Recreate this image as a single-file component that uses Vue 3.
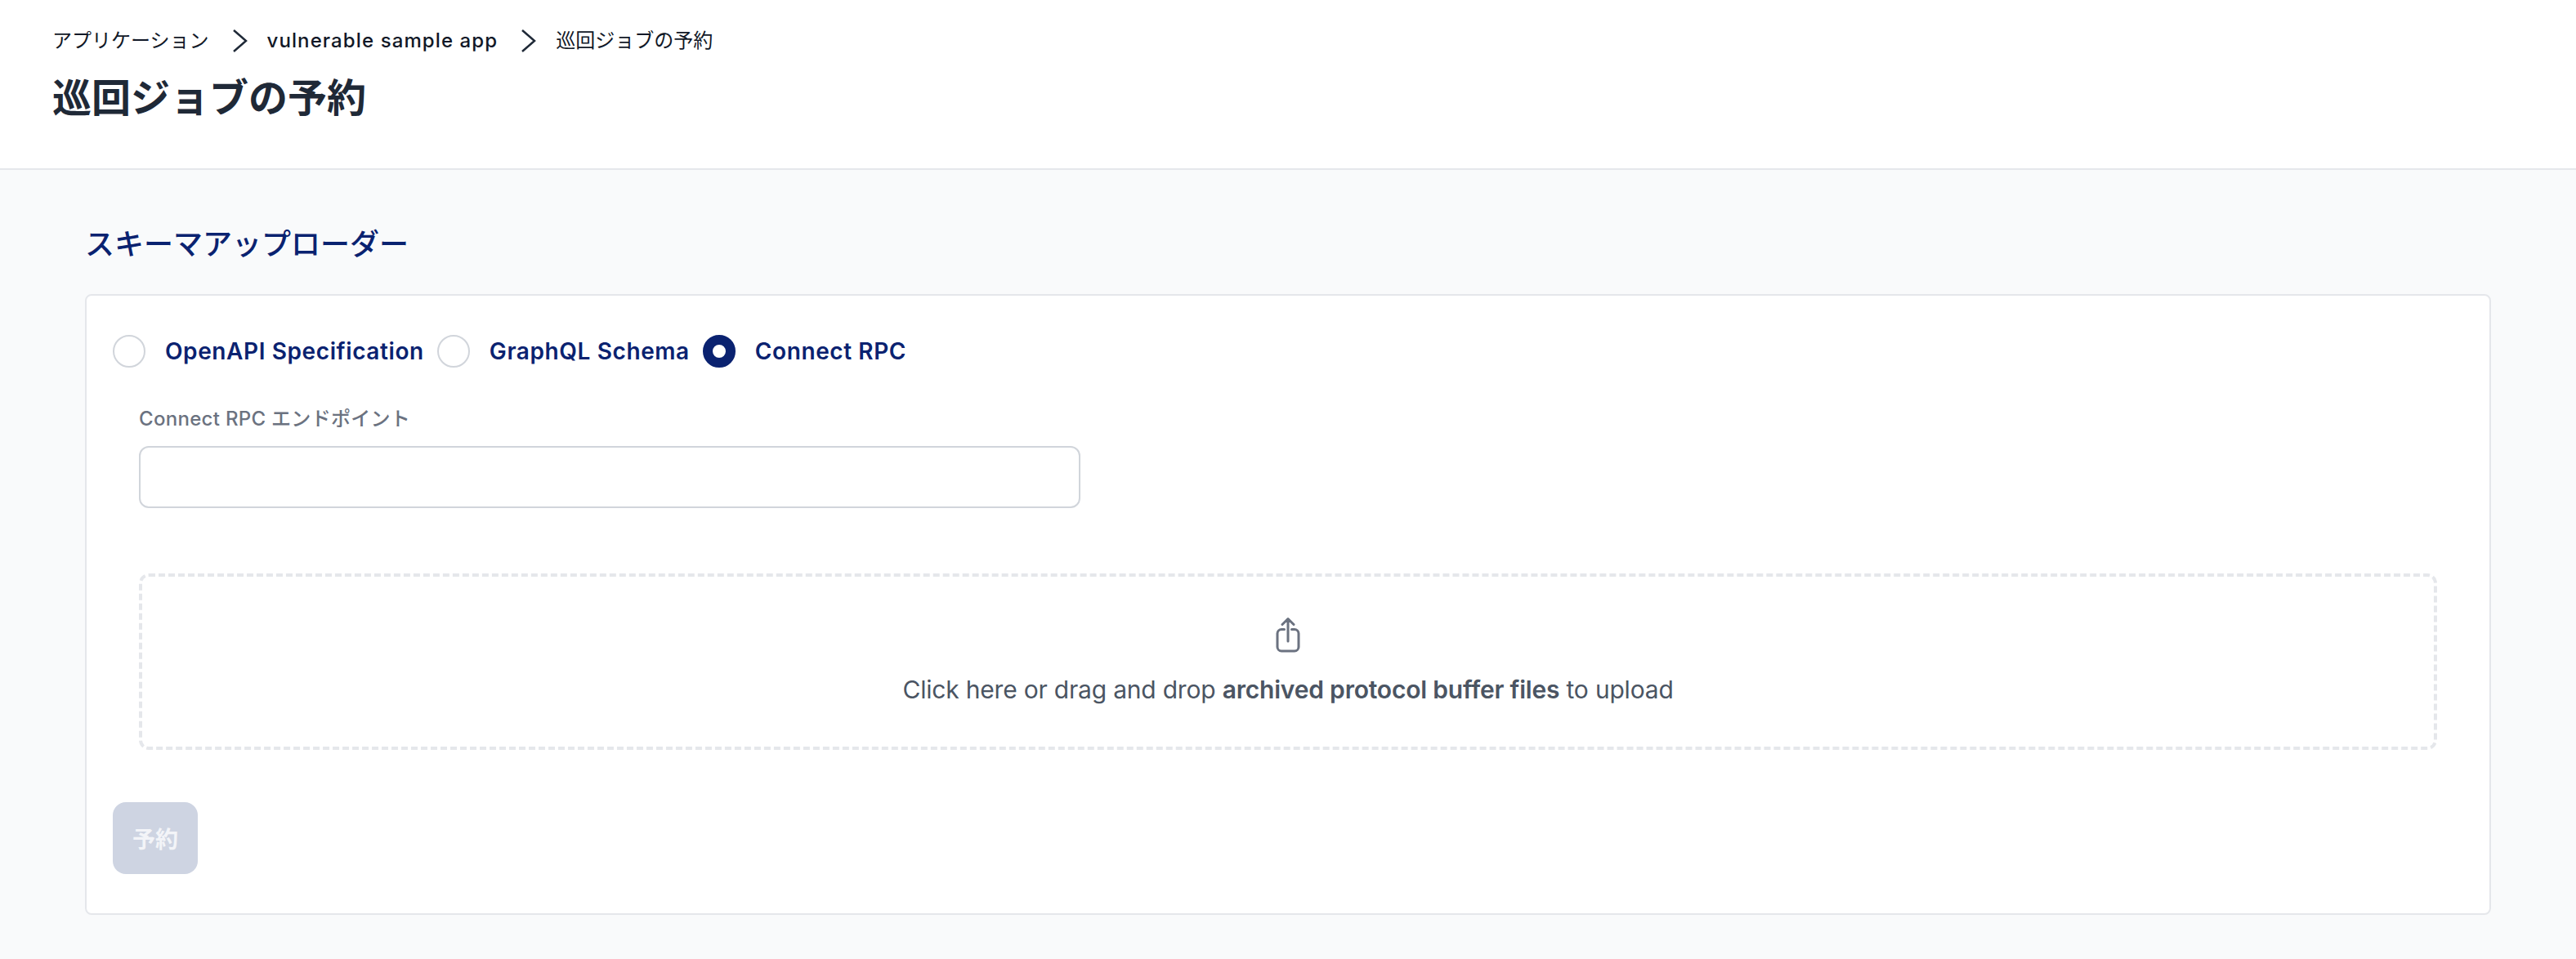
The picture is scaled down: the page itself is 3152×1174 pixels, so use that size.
<template>
  <div class="page">
    <header class="page-header">
      <nav class="crumbs">
        <span>アプリケーション</span>
        <svg class="chevron" viewBox="0 0 20 32" fill="none"><path d="M3 3l15 13L3 29" /></svg>
        <span class="latin">vulnerable sample app</span>
        <svg class="chevron" viewBox="0 0 20 32" fill="none"><path d="M3 3l15 13L3 29" /></svg>
        <span>巡回ジョブの予約</span>
      </nav>
      <h1>巡回ジョブの予約</h1>
    </header>

    <main class="content">
      <h2>スキーマアップローダー</h2>
      <section class="card">
        <div class="radios">
          <label v-for="opt in options" :key="opt" class="radio">
            <span class="dot" :class="{ checked: opt === selected }"></span>
            <span class="radio-text">{{ opt }}</span>
          </label>
        </div>

        <div class="field">
          <label class="field-label">Connect RPC エンドポイント</label>
          <input class="field-input" type="text" />
        </div>

        <div class="dropzone">
          <svg class="upload" viewBox="0 0 32 46" fill="none">
            <path d="M16 31V3.500M9 10.500l7-7 7 7" />
            <path d="M11.500 16.500H8a5 5 0 0 0-5 5V38a5 5 0 0 0 5 5h16a5 5 0 0 0 5-5V21.500a5 5 0 0 0-5-5h-3.500" />
          </svg>
          <p>Click here or drag and drop <b>archived protocol buffer files</b> to upload</p>
        </div>

        <button class="submit" disabled>予約</button>
      </section>
    </main>
  </div>
</template>

<script setup>
const options = ['OpenAPI Specification', 'GraphQL Schema', 'Connect RPC']
const selected = 'Connect RPC'
</script>

<style>
html,
body {
  margin: 0;
  background: #f9fafb;
}
</style>

<style scoped>
.page {
  min-height: 1174px;
  background: #f9fafb;
  font-family: Inter, "Noto Sans CJK JP", sans-serif;
  color: #1f2937;
}

.page-header {
  height: 206px;
  padding: 0 64px;
  background: #fff;
  border-bottom: 2px solid #e5e7eb;
  overflow: hidden;
}

.crumbs {
  display: flex;
  align-items: center;
  gap: 24px;
  margin-top: 32px;
  height: 36px;
  font-size: 24px;
  line-height: 36px;
  color: #111827;
}

.latin {
  font-weight: 500;
  letter-spacing: 1.1px;
}

.chevron {
  width: 20px;
  height: 32px;
  margin-left: 3px;
}

.chevron path {
  stroke: #1f2937;
  stroke-width: 2.500;
}

h1 {
  margin: 16px 0 0;
  font-size: 48px;
  line-height: 72px;
  font-weight: 600;
}

.content {
  padding: 66px 104px 0;
}

h2 {
  margin: 0 0 36px;
  font-size: 36px;
  line-height: 50px;
  font-weight: 500;
  color: #0a2270;
}

.card {
  box-sizing: border-box;
  height: 760px;
  padding: 48px 32px 0;
  background: #fff;
  border: 2px solid #e5e7eb;
  border-radius: 8px;
}

.radios {
  display: flex;
  height: 40px;
  gap: 16px;
}

.radio {
  display: flex;
  align-items: center;
  gap: 24px;
}

.dot {
  box-sizing: border-box;
  width: 40px;
  height: 40px;
  border: 2px solid #d1d5db;
  border-radius: 50%;
  background: #fff;
}

.dot.checked {
  border: 12px solid #0a2270;
}

.radio-text {
  font-size: 28px;
  font-weight: 600;
  letter-spacing: 0.6px;
  color: #0a2270;
}

.field {
  margin: 45px 0 0 32px;
}

.field-label {
  display: block;
  font-size: 24px;
  line-height: 36px;
  font-weight: 500;
  letter-spacing: 0.3px;
  color: #6b7280;
}

.field-input {
  display: block;
  box-sizing: border-box;
  width: 1152px;
  height: 76px;
  margin-top: 15px;
  border: 2px solid #d1d5db;
  border-radius: 12px;
  background: #fff;
}

.dropzone {
  box-sizing: border-box;
  height: 216px;
  margin: 80px 32px 0;
  padding-top: 48px;
  border: 4px dashed #e5e7eb;
  border-radius: 12px;
  text-align: center;
}

.upload {
  display: block;
  width: 32px;
  height: 46px;
  margin: 0 auto;
}

.upload path {
  stroke: #6b7280;
  stroke-width: 3;
  stroke-linecap: round;
  stroke-linejoin: round;
}

.dropzone p {
  margin: 22px 0 0;
  font-size: 30px;
  line-height: 44px;
  letter-spacing: -0.2px;
  color: #4b5563;
}

.dropzone b {
  font-weight: 600;
}

.submit {
  display: block;
  width: 104px;
  height: 88px;
  margin-top: 64px;
  padding: 0;
  border: 0;
  border-radius: 16px;
  background: #ced4e2;
  color: #f3f4f8;
  font-family: inherit;
  font-size: 28px;
  font-weight: 600;
}
</style>
